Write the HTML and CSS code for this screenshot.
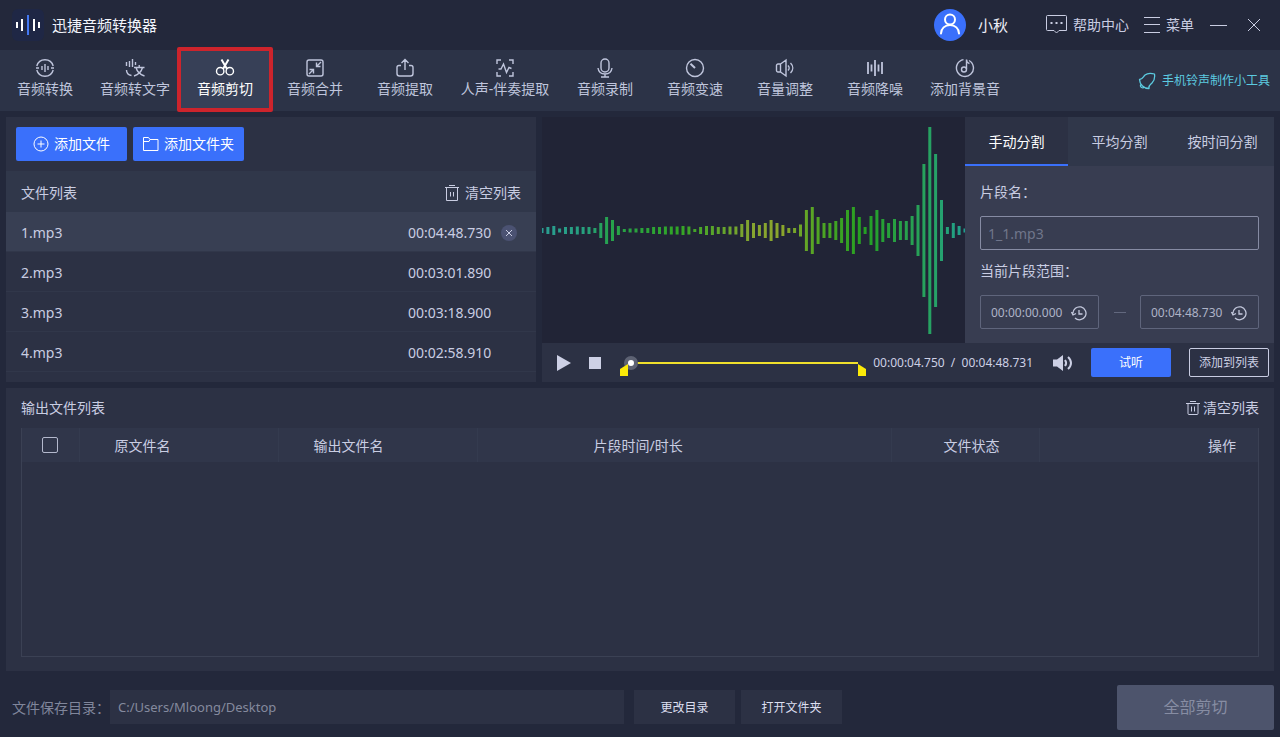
FILE: index.html
```html
<!DOCTYPE html>
<html lang="zh-CN">
<head>
<meta charset="utf-8">
<meta name="viewport" content="width=device-width, initial-scale=1">
<title>迅捷音频转换器</title>
<link rel="stylesheet" href="styles.css">
</head>
<body>
<header class="titlebar">
  <svg class="logo" width="32" height="32" viewBox="0 0 32 32" aria-hidden="true">
    <rect width="32" height="32" rx="6" fill="#1f2745"/>
    <g fill="none" stroke="#fff" stroke-width="2"><path d="M5 13v6M10 10v12M22 10v12M27 13v6"/><path d="M16 6v20" stroke="#4478f2"/></g>
  </svg>
  <h1 class="app-name">迅捷音频转换器</h1>
  <div class="window-tools">
    <button class="user" type="button">
      <svg width="32" height="32" viewBox="0 0 32 32" aria-hidden="true"><circle cx="16" cy="16" r="16" fill="#3a70fb"/><g fill="none" stroke="#fff" stroke-width="2" stroke-linecap="round"><circle cx="16" cy="10.500" r="5"/><path d="M7 24.500c0-5 4-8.500 9-8.500s9 3.500 9 8.500"/></g></svg>
      <span>小秋</span>
    </button>
    <button class="tool help" type="button">
      <svg width="22" height="20" viewBox="0 0 22 20" fill="none" stroke="currentColor" aria-hidden="true"><path d="M2 .5h17.500a1 1 0 0 1 1 1v14h-7.500l-2.500 2.500-2.500-2.500H1.500a1 1 0 0 1-1-1v-13a1 1 0 0 1 1-1z"/><path d="M4.500 8h2M9.500 8h2M14.500 8h2" stroke-width="2"/></svg>
      帮助中心
    </button>
    <button class="tool menu" type="button">
      <svg width="16" height="16" viewBox="0 0 16 16" stroke="currentColor" aria-hidden="true"><path d="M0 .5h16M0 7.500h16M0 15.500h16"/></svg>
      菜单
    </button>
    <button class="tool minimize" type="button" aria-label="最小化"><svg width="17" height="14" viewBox="0 0 17 14" stroke="currentColor" aria-hidden="true"><path d="M0 7.500h17"/></svg></button>
    <button class="tool" type="button" aria-label="关闭"><svg width="14" height="14" viewBox="0 0 14 14" stroke="currentColor" aria-hidden="true"><path d="M1 1l12 12M13 1L1 13"/></svg></button>
  </div>
</header>

<nav class="toolbar">
  <button class="mode" type="button"><svg class="icon" viewBox="0 0 20 20"><path d="M1.800 8A8.500 8.500 0 0 1 18.200 8M18.200 12A8.500 8.500 0 0 1 1.800 12M1 10h3M16 10h3M7 8v4M10 6v8M13 8v4"/></svg>音频转换</button>
  <button class="mode" type="button"><svg class="icon" viewBox="0 0 20 20"><path d="M1.500 4v4M4.500 3v6M7.500 1v8M10.500 4v3M1.500 12c0 3 1.500 5 5 5.500M9 9.500h10.500M14.200 7v2.500M11 9.500c1 4 4 7 8.500 8.500M17.500 9.500c-1 4-4 7-8.500 8.500"/></svg>音频转文字</button>
  <button class="mode active" type="button"><svg class="icon" viewBox="0 0 20 20"><circle cx="5.200" cy="13.200" r="3.700"/><circle cx="14.800" cy="13.200" r="3.700"/><path d="M6.500 1.500l5.500 9.500M13.500 1.500L8 11" stroke-width="2"/></svg>音频剪切</button>
  <button class="mode" type="button"><svg class="icon" viewBox="0 0 20 20"><rect x="2" y="2" width="16" height="16" rx="2"/><path d="M11.500 4.500v4h4M16 4l-4.500 4.500M8.500 15.500v-4h-4M4 16l4.500-4.500"/></svg>音频合并</button>
  <button class="mode" type="button"><svg class="icon" viewBox="0 0 20 20"><path d="M6 7.500H4a2 2 0 0 0-2 2v6A2.500 2.500 0 0 0 4.500 18h11a2.500 2.500 0 0 0 2.500-2.500v-6a2 2 0 0 0-2-2h-2M10 12V2M6.500 5L10 1.500 13.500 5"/></svg>音频提取</button>
  <button class="mode wide" type="button"><svg class="icon" viewBox="0 0 20 20"><path d="M2 6V2h4M14 2h4v4M18 14v4h-4M6 18H2v-4M3.500 11h2.500l2.500-5 3 8.500 2.500-5 2.500 1"/></svg>人声-伴奏提取</button>
  <button class="mode" type="button"><svg class="icon" viewBox="0 0 20 20"><rect x="6" y="1" width="8" height="13" rx="4"/><path d="M3 10c.5 4 3.500 6 7 6s6.500-2 7-6M10 16v3M6 19h8"/></svg>音频录制</button>
  <button class="mode" type="button"><svg class="icon" viewBox="0 0 20 20"><circle cx="10" cy="10" r="8.500"/><path d="M10 10L5.500 5.800" stroke-width="2"/></svg>音频变速</button>
  <button class="mode" type="button"><svg class="icon" viewBox="0 0 20 20"><path d="M5.500 6H3a1.500 1.500 0 0 0-1.500 1.500v5A1.500 1.500 0 0 0 3 14h2.500zM5.500 6L11 2v16l-5.500-4M13 7.500c1.500 1.500 1.500 3.500 0 5M15.500 5c3 3 3 7 0 10"/></svg>音量调整</button>
  <button class="mode" type="button"><svg class="icon" viewBox="0 0 20 20"><path d="M3 4v12M6.500 6.500v7M10 2v16M13.500 6.500v7M17 4v12" stroke-width="1.800"/></svg>音频降噪</button>
  <button class="mode" type="button"><svg class="icon" viewBox="0 0 20 20"><path d="M8.500 1.600A8.500 8.500 0 1 0 14 2.500M11.500 11V1.500c0 2 1 3.500 3 4"/><circle cx="9" cy="11.500" r="2.500"/></svg>添加背景音</button>
  <a class="ringtone" href="#ringtone"><svg width="18" height="18" viewBox="0 0 18 18" fill="none" stroke="currentColor" stroke-width="1.300" stroke-linejoin="round" aria-hidden="true"><path d="M1.500 7.500C4.500 7.500 5 5 7 3c2.500-2 6-2 9.500-1 .5 3.500 0 6.500-2.500 9-2 2-3.500 2.500-3 5.500-2.500 0-5-1-6.500-2.500s-3-4-3-6.500zM3 12.500c-1 1-.5 2.500.5 3s2 .5 3-.5"/></svg>手机铃声制作小工具</a>
</nav>

<main class="workspace">
  <div class="top-row">
    <section class="panel files">
      <div class="file-actions">
        <button class="primary add" type="button"><svg width="16" height="16" viewBox="0 0 16 16" fill="none" stroke="currentColor" aria-hidden="true"><circle cx="8" cy="8" r="7"/><path d="M8 4.500v7M4.500 8h7"/></svg>添加文件</button>
        <button class="primary add" type="button"><svg width="16" height="16" viewBox="0 0 16 16" fill="none" stroke="currentColor" aria-hidden="true"><path d="M.5 14.500V1.500h5l1.500 2h8v11zM.5 5.500H6l1-2"/></svg>添加文件夹</button>
      </div>
      <div class="list-head">
        <h2 class="heading">文件列表</h2>
        <button class="tool clear" type="button"><svg width="16" height="16" viewBox="0 0 16 16" fill="none" stroke="currentColor" aria-hidden="true"><path d="M1 2.500h14M5 .5h6M2.500 2.500v13h11v-13M6.500 7v4.500M9.500 7v4.500"/></svg>清空列表</button>
      </div>
      <ul class="file-list">
        <li class="file selected"><span>1.mp3</span><time class="duration">00:04:48.730</time><button class="remove" type="button" aria-label="移除"><svg width="8" height="8" viewBox="0 0 8 8" stroke="currentColor" aria-hidden="true"><path d="M1 1l6 6M7 1L1 7"/></svg></button></li>
        <li class="file"><span>2.mp3</span><time class="duration">00:03:01.890</time></li>
        <li class="file"><span>3.mp3</span><time class="duration">00:03:18.900</time></li>
        <li class="file"><span>4.mp3</span><time class="duration">00:02:58.910</time></li>
      </ul>
    </section>

    <section class="panel editor">
      <div class="editor-main">
        <div class="wave">
          <svg class="wave-art" viewBox="0 0 423 226" preserveAspectRatio="none" role="img" aria-label="波形">
            <defs>
              <linearGradient id="spectrum" gradientUnits="userSpaceOnUse" x1="0" y1="0" x2="423" y2="0">
                <stop offset="0" stop-color="#2a9d92"/><stop offset=".1" stop-color="#26a07e"/><stop offset=".16" stop-color="#26a24c"/><stop offset=".32" stop-color="#30a526"/><stop offset=".5" stop-color="#87a530"/><stop offset=".57" stop-color="#8aa52c"/><stop offset=".65" stop-color="#52a524"/><stop offset=".76" stop-color="#24a022"/><stop offset=".85" stop-color="#28a048"/><stop offset=".93" stop-color="#26a267"/><stop offset="1" stop-color="#20a090"/>
              </linearGradient>
            </defs>
            <path id="bars" stroke="url(#spectrum)" stroke-width="3" fill="none"/>
          </svg>
        </div>
        <div class="split">
          <div class="tabs" role="tablist">
            <button class="tab current" type="button" role="tab" aria-selected="true">手动分割</button>
            <button class="tab" type="button" role="tab" aria-selected="false">平均分割</button>
            <button class="tab" type="button" role="tab" aria-selected="false">按时间分割</button>
          </div>
          <form class="split-form">
            <label class="label" for="clip-name">片段名：</label>
            <input class="field" id="clip-name" type="text" value="1_1.mp3">
            <label class="label" for="range-start">当前片段范围：</label>
            <div class="range">
              <div class="time-box"><input class="time-input" id="range-start" type="text" value="00:00:00.000"><svg class="clock" viewBox="0 0 16 16"><path d="M2 8.500A6.500 6.500 0 1 1 4 13M.5 7l1.500 3 3-1.500M8 5v4h3.500"/></svg></div>
              <span class="dash"></span>
              <div class="time-box"><input class="time-input" type="text" value="00:04:48.730" aria-label="结束时间"><svg class="clock" viewBox="0 0 16 16"><path d="M2 8.500A6.500 6.500 0 1 1 4 13M.5 7l1.500 3 3-1.500M8 5v4h3.500"/></svg></div>
            </div>
          </form>
        </div>
      </div>
      <div class="player">
        <button class="tool play" type="button" aria-label="播放"><svg width="14" height="16" viewBox="0 0 14 16" aria-hidden="true"><path d="M0 0l14 8-14 8z" fill="currentColor"/></svg></button>
        <button class="tool stop" type="button" aria-label="停止"><svg width="12" height="12" aria-hidden="true"><rect width="12" height="12" fill="currentColor"/></svg></button>
        <div class="seek">
          <input class="seek-input" type="range" min="0" max="288731" value="4750" aria-label="播放进度">
          <svg class="trim trim-start" viewBox="0 0 8 12"><path d="M0 5l8-5v12H0z"/></svg>
          <svg class="trim trim-end" viewBox="0 0 8 12"><path d="M8 5L0 0v12h8z"/></svg>
        </div>
        <span class="clock-text">00:00:04.750&nbsp; /&nbsp; 00:04:48.731</span>
        <button class="tool volume" type="button" aria-label="音量"><svg width="20" height="16" viewBox="0 0 20 16" fill="none" stroke="currentColor" stroke-width="2" aria-hidden="true"><path d="M0 4.500h4L10 0v16l-6-4.500H0z" fill="currentColor" stroke="none"/><path d="M12 5c1.500 2 1.500 4 0 6M15 2c4 3.500 4 8.500 0 12"/></svg></button>
        <button class="primary small" type="button">试听</button>
        <button class="small outline" type="button">添加到列表</button>
      </div>
    </section>
  </div>

  <section class="panel output">
    <div class="output-head">
      <h2 class="heading">输出文件列表</h2>
      <button class="tool clear-output" type="button"><svg width="14" height="14" viewBox="0 0 14 14" fill="none" stroke="currentColor" aria-hidden="true"><path d="M0 2.500h14M4 .5h6M2 2.500v10a1 1 0 0 0 1 1h8a1 1 0 0 0 1-1v-10M5.500 5.500v5M8.500 5.500v5"/></svg>清空列表</button>
    </div>
    <div class="table-box">
      <table class="results">
        <thead><tr>
          <th class="col-check"><input class="check" type="checkbox" aria-label="全选"></th>
          <th class="col-name">原文件名</th>
          <th class="col-name">输出文件名</th>
          <th class="col-time">片段时间/时长</th>
          <th class="col-state">文件状态</th>
          <th class="col-action">操作</th>
        </tr></thead>
        <tbody></tbody>
      </table>
    </div>
  </section>
</main>

<footer class="footer">
  <label class="path-label" for="path">文件保存目录：</label>
  <input class="path" id="path" type="text" value="C:/Users/Mloong/Desktop" readonly>
  <button class="dir" type="button">更改目录</button>
  <button class="dir" type="button">打开文件夹</button>
  <button class="cut-all" type="button" disabled>全部剪切</button>
</footer>
<script src="wave.js"></script>
</body>
</html>
```
FILE: styles.css
```css
* { box-sizing: border-box; }
body {
  margin: 0;
  min-height: 100vh;
  display: flex;
  flex-direction: column;
  background: #23283b;
  color: #c9cde2;
  font: 14px/20px "Noto Sans", "Noto Sans CJK SC", sans-serif;
}
button, input { font: inherit; color: inherit; margin: 0; }
button { border: 0; padding: 0; background: none; white-space: nowrap; }
svg { flex: none; display: block; }
h1, h2 { margin: 0; font-weight: 400; }

.titlebar { display: flex; align-items: center; height: 50px; padding: 0 19px 0 12px; }
.app-name { margin-left: 8px; font-size: 15px; color: #f2f4fb; }
.window-tools { display: flex; align-items: center; margin-left: auto; }
.user { display: flex; align-items: center; gap: 12px; font-size: 15px; color: #eceef8; }
.tool { display: flex; align-items: center; gap: 6px; }
.help { gap: 5px; margin-left: 38px; }
.menu { margin-left: 15px; }
.minimize { margin: 0 20px 0 16px; }

.toolbar { display: flex; height: 61px; background: #2c3347; }
.mode {
  position: relative;
  width: 90px;
  display: flex;
  flex-direction: column;
  align-items: center;
  gap: 1px;
  padding-top: 8px;
  color: #bfc5dc;
}
.wide { width: 110px; }
.icon { width: 20px; height: 20px; fill: none; stroke: currentColor; stroke-width: 1.4; }
.active { background: #374057; color: #fff; }
.active::after {
  content: "";
  position: absolute;
  inset: -3px -3px -1px;
  border: 4px solid #cd242c;
  border-radius: 2px;
}
.ringtone {
  display: flex;
  align-items: center;
  gap: 6px;
  margin-left: auto;
  padding-right: 10px;
  font-size: 12px;
  color: #5ccbe0;
  text-decoration: none;
}

.workspace { flex: 1; display: flex; flex-direction: column; gap: 6px; padding: 6px 6px 0; }
.top-row { display: grid; grid-template-columns: 530fr 732fr; gap: 6px; height: 265px; }
.panel { background: #2c3144; min-width: 0; }

.files { overflow: hidden; }
.file-actions { display: flex; gap: 6px; padding: 10px; }
.primary { background: #3a70fb; color: #fff; border-radius: 2px; }
.add { display: flex; align-items: center; justify-content: center; gap: 5px; width: 111px; height: 34px; }
.list-head { display: flex; align-items: center; justify-content: space-between; height: 41px; padding: 2px 15px 0; background: #30374a; }
.heading { font-size: 14px; }
.clear { gap: 5px; }
.file-list { list-style: none; margin: 0; padding: 0; }
.file { display: flex; align-items: center; height: 40px; padding: 2px 19px 0 15px; border-bottom: 1px solid #31374a; }
.file.selected { background: #383f53; }
.duration { width: 84px; margin-left: auto; margin-right: 25px; }
.selected .duration { margin-right: 9px; }
.remove { width: 16px; height: 16px; border-radius: 50%; background: #4b5272; display: grid; place-items: center; }

.editor { display: flex; flex-direction: column; }
.editor-main { flex: 1; display: flex; min-height: 0; }
.wave { flex: 1; min-width: 0; background: #212436; }
.wave-art { width: 100%; height: 100%; }
.split { width: 309px; display: flex; flex-direction: column; background: #383d51; }
.tabs { display: flex; height: 49px; background: #30374a; }
.tab { flex: 1; padding-top: 2px; border-bottom: 2px solid transparent; }
.tab.current { background: #2c3144; border-color: #3a70fb; color: #fff; }
.split-form { padding: 16px 15px 0; }
.label { display: block; }
.field {
  display: block;
  width: 100%;
  height: 34px;
  margin: 14px 0 11px;
  padding: 0 7px;
  border: 1px solid #868ba3;
  border-radius: 2px;
  background: none;
  color: #70768b;
}
.range { display: flex; align-items: center; justify-content: space-between; margin-top: 14px; }
.time-box { display: flex; align-items: center; width: 119px; height: 34px; padding: 2px 11px 0 10px; border: 1px solid #5f657c; border-radius: 2px; }
.time-input { flex: 1; min-width: 0; padding: 0; border: 0; background: none; font-size: 12px; color: #aeb3c7; }
.clock { width: 16px; height: 16px; fill: none; stroke: #c3c8dc; stroke-width: 1.3; }
.dash { width: 12px; height: 1px; background: #62687e; }

.player { display: flex; align-items: center; height: 39px; padding: 0 5px 0 15px; background: #2c3144; color: #cdd0e5; }
.stop { margin-left: 18px; }
.seek { position: relative; flex: 1; height: 24px; margin: 0 7px 0 19px; }
.seek-input { appearance: none; display: block; width: 100%; height: 24px; background: none; }
.seek-input::-webkit-slider-runnable-track {
  height: 2px;
  background: linear-gradient(#f0e02c, #f0e02c) center / calc(100% - 16px) 2px no-repeat;
}
.seek-input::-webkit-slider-thumb {
  appearance: none;
  width: 14px;
  height: 14px;
  margin-top: -6px;
  border: 4px solid #5d6273;
  border-radius: 50%;
  background: #fff;
}
.trim { position: absolute; top: 13px; width: 8px; height: 12px; fill: #fbe908; }
.trim-start { left: 0; }
.trim-end { right: 0; }
.clock-text { font-size: 12px; white-space: nowrap; }
.volume { margin: 0 18px 0 20px; }
.small { width: 80px; height: 29px; border-radius: 2px; font-size: 12px; }
.outline { margin-left: 18px; border: 1px solid #c9cde2; }

.output { flex: 1; display: flex; flex-direction: column; padding: 0 15px 14px; }
.output-head { display: flex; align-items: center; justify-content: space-between; height: 40px; }
.clear-output { gap: 3px; }
.table-box { flex: 1; border: 1px solid #3b4154; border-top: 0; }
.results { width: 100%; border-collapse: collapse; table-layout: fixed; }
.results th { height: 34px; padding: 2px 0 0; background: #30364a; border-right: 1px solid #343b4f; font-weight: 400; text-align: left; }
.results .col-check { width: 57px; padding: 0; text-align: center; }
.check { appearance: none; display: block; width: 16px; height: 16px; margin: 0 auto; border: 1px solid #b4b9cd; border-radius: 2px; }
.results .col-name { width: 199px; padding-left: 35px; }
.results .col-time { padding-left: 116px; }
.results .col-state { width: 148px; padding-left: 52px; }
.results .col-action { width: 219px; padding-right: 22px; border-right: 0; text-align: right; }

.footer { display: flex; align-items: center; height: 66px; padding: 6px 6px 0 12px; }
.path-label { width: 98px; padding-top: 2px; color: #80869b; white-space: nowrap; }
.path { width: 514px; height: 34px; margin-right: 10px; padding: 0 8px; border: 0; background: #2c3144; font-size: 13px; color: #858a9e; }
.dir { width: 101px; height: 34px; margin-right: 6px; padding-top: 2px; background: #2c3144; font-size: 12px; color: #dcdff0; }
.cut-all { width: 157px; height: 45px; margin-left: auto; border-radius: 2px; background: #4d546c; font-size: 16px; color: #878da3; }
```
FILE: wave.js
```js
// Bar heights of the waveform, left to right.
const heights = [
  5, 7, 9, 4, 7, 7, 8, 7, 7, 5, 15, 27, 21, 9, 3, 4, 4, 5, 5, 7,
  7, 8, 8, 8, 9, 8, 3, 7, 9, 9, 7, 7, 8, 8, 13, 21, 15, 11, 15, 21,
  15, 11, 5, 5, 12, 41, 47, 27, 15, 15, 19, 25, 41, 47, 27, 7, 29, 41, 23, 15,
  23, 19, 19, 29, 51, 133, 207, 153, 61, 7, 15, 9, 4
];
const step = 423 / 72;
const middle = 113.5;
document.getElementById("bars").setAttribute("d", heights.map(
  (h, i) => `M${(i * step).toFixed(1)} ${middle - h / 2}v${h}`
).join(""));
```
